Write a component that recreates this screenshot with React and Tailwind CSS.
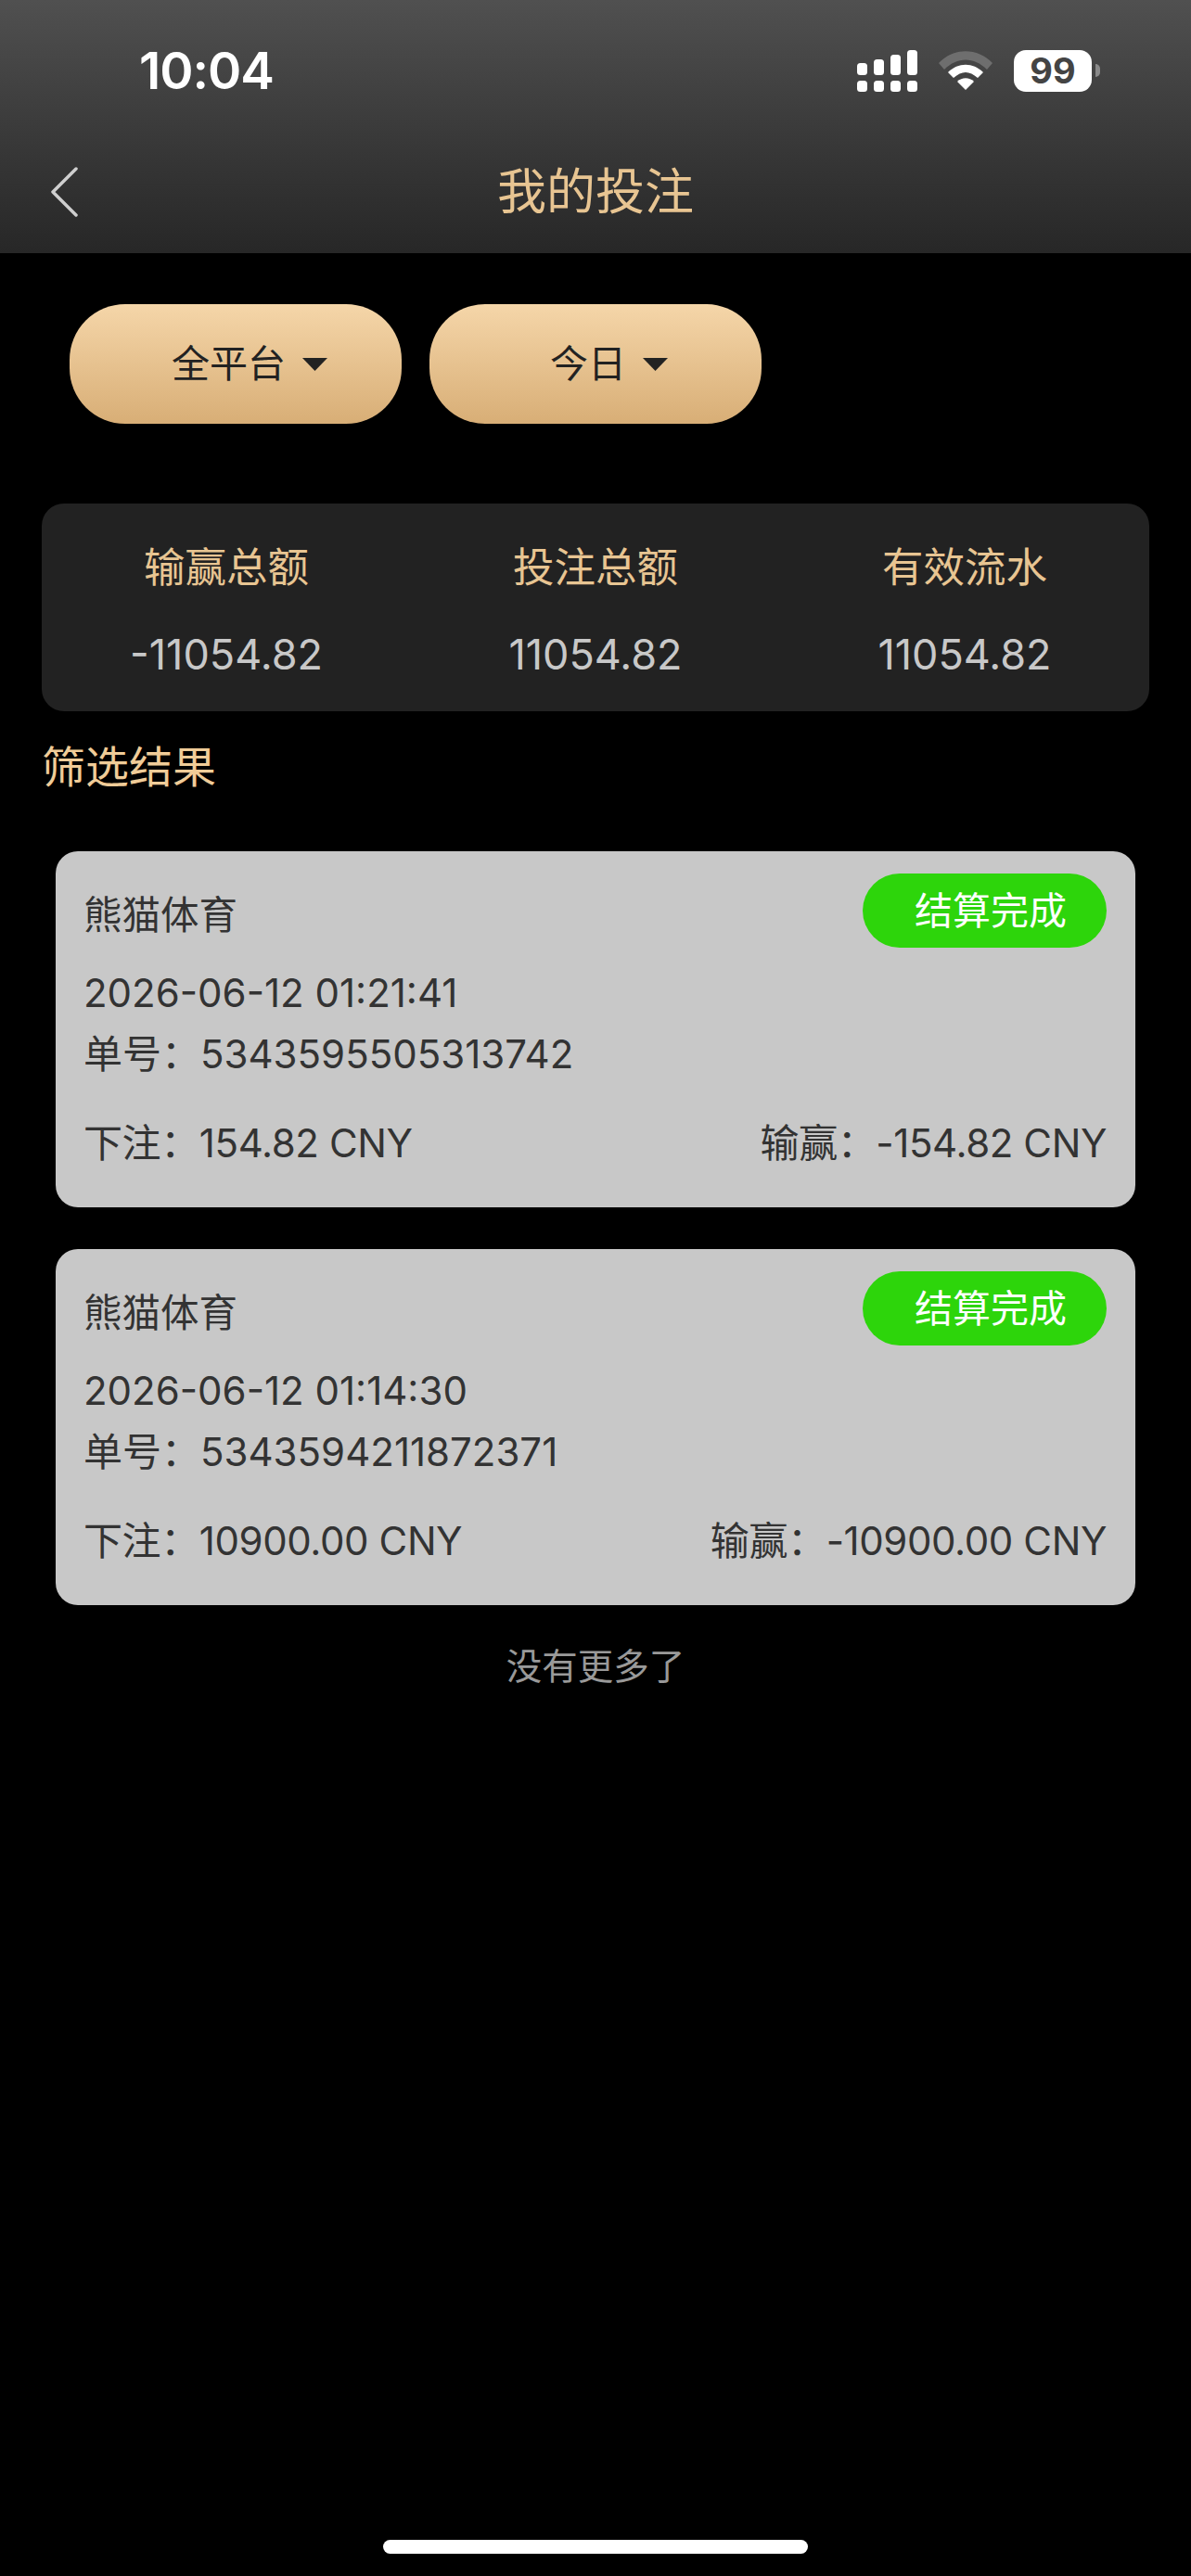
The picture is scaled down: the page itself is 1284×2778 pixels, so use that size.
const latin = "font-['Inter','Noto_Sans_CJK_SC',sans-serif]";

const orders = [
  { time: "2026-06-12 01:21:41", no: "5343595505313742", bet: "154.82 CNY", win: "-154.82 CNY" },
  { time: "2026-06-12 01:14:30", no: "5343594211872371", bet: "10900.00 CNY", win: "-10900.00 CNY" },
];

const stats = [
  { label: "输赢总额", value: "-11054.82" },
  { label: "投注总额", value: "11054.82" },
  { label: "有效流水", value: "11054.82" },
];

const SignalIcon = () => (
  <svg width="65" height="45" viewBox="0 0 65 45" fill="#fff">
    <rect x="0" y="14" width="11" height="13" rx="3.5" />
    <rect x="18" y="10" width="11" height="17" rx="3.5" />
    <rect x="36" y="5" width="11" height="22" rx="3.5" />
    <rect x="54" y="0" width="11" height="27" rx="3.5" />
    <rect x="0" y="33" width="11" height="12" rx="3.5" />
    <rect x="18" y="33" width="11" height="12" rx="3.5" />
    <rect x="36" y="33" width="11" height="12" rx="3.5" />
    <rect x="54" y="33" width="11" height="12" rx="3.5" />
  </svg>
);

const WifiIcon = () => (
  <svg width="58" height="42" viewBox="0 0 58 42">
    <path d="M0 13 C16 -4 42 -4 58 13 L52 20 C38 6 20 6 6 20 Z" fill="#6e6e6e" />
    <path d="M10 23 C21 12 37 12 48 23 L42 29 C33 21 25 21 16 29 Z" fill="#fff" />
    <path d="M20 33 C25 28 33 28 38 33 L29 42 Z" fill="#fff" />
  </svg>
);

const Caret = () => (
  <svg width="27" height="14" viewBox="0 0 27 14" fill="#222">
    <path d="M0 0 H27 L13.5 14 Z" />
  </svg>
);

const FilterButton = ({ label, textClass }) => (
  <div className={`flex h-[129px] w-[358px] items-center rounded-[60px] bg-gradient-to-b from-[#f5d6a9] to-[#d8ae76] ${textClass}`}>
    <span className="text-[41px] leading-none text-[#222]">{label}</span>
    <span className="ml-[18px]">
      <Caret />
    </span>
  </div>
);

const OrderCard = ({ order }) => (
  <div className="flex h-[384px] flex-col rounded-[24px] bg-[#c8c8c8] pl-[30px] pr-[31px] pt-[24px] text-[#333]">
    <div className="flex h-[80px] items-center justify-between">
      <span className="mt-[12px] text-[41.5px] leading-none">熊猫体育</span>
      <span className="flex h-[80px] w-[263px] items-center rounded-[40px] bg-[#2dd50b] pl-[56px] text-[41px] leading-none text-white">
        结算完成
      </span>
    </div>
    <div className="mt-[24px] text-[42px] leading-[50px]">{order.time}</div>
    <div className="mt-[16px] flex text-[42px] leading-[50px]">
      <span>单号：</span>
      <span>{order.no}</span>
    </div>
    <div className="mt-[46px] flex justify-between text-[42px] leading-[50px] tracking-[-0.4px]">
      <span>下注：{order.bet}</span>
      <span>输赢：{order.win}</span>
    </div>
  </div>
);

export default function App() {
  return (
    <div className={`flex h-[2778px] w-[1284px] flex-col overflow-hidden bg-black ${latin}`}>
      <header className="h-[273px] bg-gradient-to-b from-[#505050] to-[#272727]">
        <div className="flex h-[152px] items-center justify-between pl-[150px] pr-[98px]">
          <span className="text-[55px] font-semibold leading-none tracking-[-1px] text-white">10:04</span>
          <div className="flex items-center">
            <SignalIcon />
            <span className="ml-[23px]">
              <WifiIcon />
            </span>
            <div className="ml-[23px] flex h-[45px] w-[84px] items-center justify-center rounded-[13px] bg-white text-[38px] font-bold leading-none text-[#444]">
              99
            </div>
            <span className="ml-[4px] h-[14px] w-[5px] rounded-r-full bg-[#8a8a8a]" />
          </div>
        </div>
        <div className="relative flex h-[110px] items-center justify-center">
          <svg className="absolute left-[54px] top-[28px]" width="30" height="54" viewBox="0 0 30 54" fill="none">
            <path d="M28 2 L3 27 L28 52" stroke="#cfcfcf" strokeWidth="3.5" strokeLinecap="round" strokeLinejoin="round" />
          </svg>
          <span className="mt-[1px] text-[53px] leading-none text-[#e8c592]">我的投注</span>
        </div>
      </header>

      <div className="mt-[55px] flex gap-[30px] pl-[75px]">
        <FilterButton label="全平台" textClass="pl-[110px]" />
        <FilterButton label="今日" textClass="pl-[130px]" />
      </div>

      <section className="mx-[45px] mt-[86px] grid h-[224px] grid-cols-3 rounded-[24px] bg-[#222] pt-[44px] text-center">
        {stats.map((s) => (
          <div key={s.label} className="flex flex-col items-center">
            <span className="text-[44.5px] leading-[50px] text-[#e8c592]">{s.label}</span>
            <span className="mt-[44px] text-[45px] leading-[50px] text-[#c8c8c8]">{s.value}</span>
          </div>
        ))}
      </section>

      <h2 className="ml-[45px] mt-[32px] text-[47px] font-normal leading-[56px] text-[#f0cc98]">筛选结果</h2>

      <div className="mx-[60px] mt-[63px] flex flex-col gap-[45px]">
        {orders.map((o) => (
          <OrderCard key={o.no} order={o} />
        ))}
      </div>

      <p className="mt-[41px] text-center text-[38.5px] leading-[50px] text-[#999]">没有更多了</p>

      <div className="mb-[24px] mt-auto flex justify-center">
        <div className="h-[15px] w-[458px] rounded-full bg-white" />
      </div>
    </div>
  );
}
